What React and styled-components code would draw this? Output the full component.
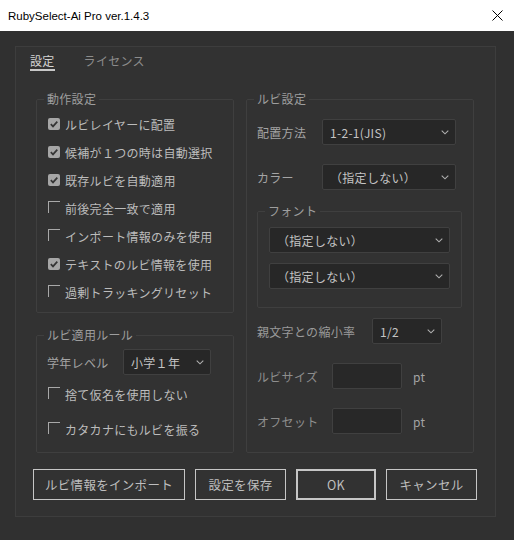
import React from 'react';
import styled, { createGlobalStyle } from 'styled-components';

const Global = createGlobalStyle`
  html, body { margin: 0; padding: 0; background: #303030; }
  body { font-family: "Noto Sans CJK JP", "Noto Sans", sans-serif; }
  * { box-sizing: border-box; }
`;

const Window = styled.div`
  width: 514px;
  height: 540px;
  background: #303030;
  display: flex;
  flex-direction: column;
  overflow: hidden;
`;

const TitleBar = styled.div`
  height: 31px;
  flex: none;
  background: #ffffff;
  display: flex;
  align-items: center;
  justify-content: space-between;
  padding: 0 11px 0 8px;
  font-family: "Liberation Sans", Arial, sans-serif;
  font-size: 11.5px;
  color: #000;
`;

const Panel = styled.div`
  margin: 15px 18px 23px 15px;
  height: 471px;
  border: 1px solid #3d3d3d;
  background: #323232;
  padding-top: 6px;
  display: flex;
  flex-direction: column;
  font-size: 12px;
  letter-spacing: 0.3px;
`;

const TabRow = styled.div`
  display: flex;
  gap: 29px;
  margin-left: 14px;
`;

const Tab = styled.div`
  line-height: 16px;
  border-bottom: 2px solid ${p => (p.$active ? '#c8c8c8' : 'transparent')};
  color: ${p => (p.$active ? '#d2d2d2' : '#8c8c8c')};
`;

const Columns = styled.div`
  display: flex;
  gap: 12px;
  margin: 19px 0 0 20px;
`;

const Column = styled.div`
  width: ${p => p.$w}px;
  display: flex;
  flex-direction: column;
  gap: ${p => p.$gap || 0}px;
`;

const Group = styled.fieldset`
  margin: 0;
  min-width: 0;
  width: ${p => (p.$w ? `${p.$w}px` : 'auto')};
  border: 1px solid #3f3f3f;
  border-radius: 2px;
  padding: 0;
  display: flex;
  flex-direction: column;
`;

const GroupBody = styled.div`
  display: flex;
  flex-direction: column;
  padding: ${p => p.$pad};
`;

const Legend = styled.legend`
  margin-left: 7px;
  padding: 0 3px;
  line-height: 18px;
  color: #9e9e9e;
`;

const CheckRow = styled.div`
  height: 28px;
  display: flex;
  align-items: center;
  padding-left: 11px;
  margin-top: ${p => p.$mt || 0}px;
  color: #bcbcbc;
`;

const Box = styled.span`
  width: 12px;
  height: 12px;
  flex: none;
  margin-right: 5px;
  display: flex;
  align-items: center;
  justify-content: center;
  border-radius: ${p => (p.$checked ? '2px' : '0')};
  background: ${p => (p.$checked ? '#a6a6a6' : 'transparent')};
  border-top: ${p => (p.$checked ? 'none' : '1px solid #a8a8a8')};
  border-left: ${p => (p.$checked ? 'none' : '1px solid #a8a8a8')};
  margin-bottom: ${p => (p.$checked ? 0 : 2)}px;
`;

const Checkbox = ({ checked, children, mt }) => (
  <CheckRow $mt={mt}>
    <Box $checked={checked}>
      {checked && (
        <svg width="10" height="10" viewBox="0 0 10 10">
          <path d="M1.8 5.2 L4 7.4 L8.3 2.6" fill="none" stroke="#353535" strokeWidth="1.7" />
        </svg>
      )}
    </Box>
    {children}
  </CheckRow>
);

const FieldRow = styled.div`
  display: flex;
  align-items: center;
  margin-top: ${p => p.$mt || 0}px;
  margin-left: ${p => p.$ml || 0}px;
`;

const Label = styled.span`
  width: ${p => p.$w}px;
  flex: none;
  color: ${p => p.$color || '#a4a4a4'};
`;

const SelectBox = styled.div`
  width: ${p => p.$w}px;
  height: 26px;
  flex: none;
  background: #272727;
  border: 1px solid #404040;
  border-radius: 2px;
  display: flex;
  align-items: center;
  justify-content: space-between;
  padding: 0 6px 0 7px;
  color: #c4c4c4;
`;

const Chevron = () => (
  <svg width="8" height="5" viewBox="0 0 8 5">
    <path d="M0.7 0.7 L4 3.8 L7.3 0.7" fill="none" stroke="#b0b0b0" strokeWidth="1.1" />
  </svg>
);

const Select = ({ w, children }) => (
  <SelectBox $w={w}>
    <span>{children}</span>
    <Chevron />
  </SelectBox>
);

const Input = styled.div`
  width: 70px;
  height: 26px;
  flex: none;
  background: #282828;
  border: 1px solid #404040;
  border-radius: 2px;
`;

const Unit = styled.span`
  margin-left: 11px;
  color: #a4a4a4;
`;

const ButtonRow = styled.div`
  display: flex;
  gap: 10px;
  margin: 16px 0 0 17px;
`;

const Button = styled.div`
  width: ${p => p.$w}px;
  height: 31px;
  border: ${p => (p.$primary ? '2px' : '1px')} solid #c6c6c6;
  display: flex;
  align-items: center;
  justify-content: center;
  color: #bebebe;
  font-size: 12.5px;
`;

export default function App() {
  return (
    <>
      <Global />
      <Window>
        <TitleBar>
          <span>RubySelect-Ai Pro ver.1.4.3</span>
          <svg width="11" height="11" viewBox="0 0 11 11">
            <path d="M0.5 0.5 L10.5 10.5 M10.5 0.5 L0.5 10.5" stroke="#000" strokeWidth="1" />
          </svg>
        </TitleBar>
        <Panel>
          <TabRow>
            <Tab $active>設定</Tab>
            <Tab>ライセンス</Tab>
          </TabRow>
          <Columns>
            <Column $w={198} $gap={13}>
              <Group>
                <Legend>動作設定</Legend>
                <GroupBody $pad="2px 0 6px 0">
                  <Checkbox checked>ルビレイヤーに配置</Checkbox>
                  <Checkbox checked>候補が１つの時は自動選択</Checkbox>
                  <Checkbox checked>既存ルビを自動適用</Checkbox>
                  <Checkbox>前後完全一致で適用</Checkbox>
                  <Checkbox>インポート情報のみを使用</Checkbox>
                  <Checkbox checked>テキストのルビ情報を使用</Checkbox>
                  <Checkbox>過剰トラッキングリセット</Checkbox>
                </GroupBody>
              </Group>
              <Group>
                <Legend>ルビ適用ルール</Legend>
                <GroupBody $pad="0 0 9px 0">
                  <FieldRow $mt={5} $ml={10}>
                    <Label $w={76}>学年レベル</Label>
                    <Select w={88}>小学１年</Select>
                  </FieldRow>
                  <Checkbox mt={5}>捨て仮名を使用しない</Checkbox>
                  <Checkbox mt={7}>カタカナにもルビを振る</Checkbox>
                </GroupBody>
              </Group>
            </Column>
            <Column $w={228}>
              <Group>
                <Legend>ルビ設定</Legend>
                <GroupBody $pad="0 0 18px 10px">
                  <FieldRow $mt={11}>
                    <Label $w={65}>配置方法</Label>
                    <Select w={134}>1-2-1(JIS)</Select>
                  </FieldRow>
                  <FieldRow $mt={19}>
                    <Label $w={65}>カラー</Label>
                    <Select w={134}>（指定しない）</Select>
                  </FieldRow>
                  <FieldRow $mt={12}>
                    <Group $w={205}>
                      <Legend>フォント</Legend>
                      <GroupBody $pad="0 0 18px 11px">
                        <FieldRow $mt={7}>
                          <Select w={181}>（指定しない）</Select>
                        </FieldRow>
                        <FieldRow $mt={10}>
                          <Select w={181}>（指定しない）</Select>
                        </FieldRow>
                      </GroupBody>
                    </Group>
                  </FieldRow>
                  <FieldRow $mt={10}>
                    <Label $w={115} $color="#9a9a9a">親文字との縮小率</Label>
                    <Select w={70}>1/2</Select>
                  </FieldRow>
                  <FieldRow $mt={19}>
                    <Label $w={75} $color="#8e8e8e">ルビサイズ</Label>
                    <Input />
                    <Unit>pt</Unit>
                  </FieldRow>
                  <FieldRow $mt={19}>
                    <Label $w={75} $color="#8e8e8e">オフセット</Label>
                    <Input />
                    <Unit>pt</Unit>
                  </FieldRow>
                </GroupBody>
              </Group>
            </Column>
          </Columns>
          <ButtonRow>
            <Button $w={152}>ルビ情報をインポート</Button>
            <Button $w={91}>設定を保存</Button>
            <Button $w={80} $primary>OK</Button>
            <Button $w={91}>キャンセル</Button>
          </ButtonRow>
        </Panel>
      </Window>
    </>
  );
}
